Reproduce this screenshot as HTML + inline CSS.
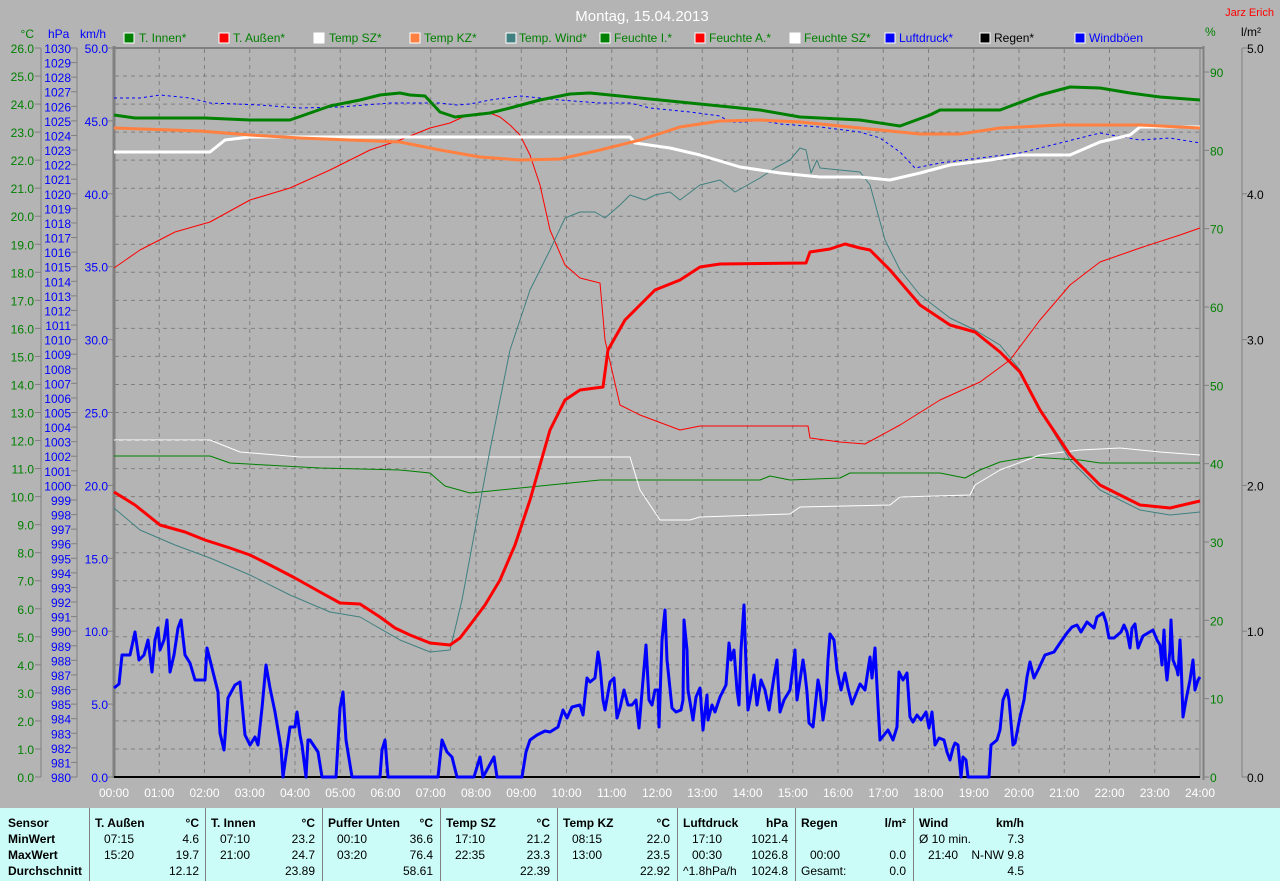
<!DOCTYPE html>
<html><head><meta charset="utf-8"><style>
html,body{margin:0;padding:0;width:1280px;height:881px;overflow:hidden;background:#b4b4b4;font-family:"Liberation Sans",sans-serif}
svg{position:absolute;left:0;top:0}
svg text{font-family:"Liberation Sans",sans-serif;font-size:12px}
#tbl{position:absolute;left:0;top:808px;width:1280px;height:73px;background:#ccfcf8;font-size:12px;color:#000}
.c{position:absolute;top:0;height:73px}
.bl{border-left:1px solid #808080}
.r{position:absolute;white-space:nowrap}
.b{font-weight:bold}
</style></head><body>
<svg width="1280" height="808" viewBox="0 0 1280 808">
<text x="642" y="21" fill="#fff" font-size="15" text-anchor="middle" style="font-size:15px">Montag, 15.04.2013</text>
<text x="1274" y="16" fill="#f00" text-anchor="end" style="font-size:11px">Jarz Erich</text>
<g style="font-size:11px">
<rect x="124" y="33" width="10" height="10" fill="#008000" stroke="#fff"/><text x="139" y="42" fill="#008000">T. Innen*</text>
<rect x="219" y="33" width="10" height="10" fill="#f00" stroke="#fff"/><text x="233" y="42" fill="#008000">T. Außen*</text>
<rect x="314" y="33" width="10" height="10" fill="#fff" stroke="#fff"/><text x="329" y="42" fill="#008000">Temp SZ*</text>
<rect x="410" y="33" width="10" height="10" fill="#ff8040" stroke="#fff"/><text x="424" y="42" fill="#008000">Temp KZ*</text>
<rect x="506" y="33" width="10" height="10" fill="#408080" stroke="#fff"/><text x="519" y="42" fill="#008000">Temp. Wind*</text>
<rect x="600" y="33" width="10" height="10" fill="#008000" stroke="#fff"/><text x="614" y="42" fill="#008000">Feuchte I.*</text>
<rect x="695" y="33" width="10" height="10" fill="#f00" stroke="#fff"/><text x="709" y="42" fill="#008000">Feuchte A.*</text>
<rect x="790" y="33" width="10" height="10" fill="#fff" stroke="#fff"/><text x="804" y="42" fill="#008000">Feuchte SZ*</text>
<rect x="885" y="33" width="10" height="10" fill="#00f" stroke="#fff"/><text x="899" y="42" fill="#00f">Luftdruck*</text>
<rect x="980" y="33" width="10" height="10" fill="#000" stroke="#fff"/><text x="994" y="42" fill="#000">Regen*</text>
<rect x="1075" y="33" width="10" height="10" fill="#00f" stroke="#fff"/><text x="1089" y="42" fill="#00f">Windböen</text>
</g>
<text x="34" y="38" fill="#008000" text-anchor="end">°C</text>
<text x="48" y="38" fill="#00f">hPa</text>
<text x="80" y="38" fill="#00f">km/h</text>
<text x="1205" y="36" fill="#008000">%</text>
<text x="1241" y="36" fill="#000">l/m²</text>
<!-- grid -->
<g stroke="#808080" stroke-dasharray="4,4" stroke-width="1" id="grid"></g>
<g id="gh" stroke="#808080" stroke-dasharray="4,4"></g>
<!-- axes -->
<line x1="41" y1="48" x2="41" y2="777" stroke="#808080"/>
<line x1="77" y1="48" x2="77" y2="777" stroke="#808080"/>
<line x1="114" y1="46" x2="114" y2="778" stroke="#808080" stroke-width="3"/>
<line x1="113" y1="48" x2="1203" y2="48" stroke="#808080" stroke-width="2"/>
<line x1="1200" y1="48" x2="1200" y2="778" stroke="#808080"/>
<line x1="1203.5" y1="46" x2="1203.5" y2="780" stroke="#808080" stroke-width="2"/>
<line x1="1242" y1="48" x2="1242" y2="777" stroke="#808080"/>
<line x1="114" y1="777" x2="1200" y2="777" stroke="#000" stroke-width="2"/>
<g id="labels"></g>
<g fill="none" stroke-linejoin="round">
<polyline stroke="#008000" stroke-width="1" points="114,456 210,456 230,463 320,468 400,470 430,473 445,486 470,493 520,488 600,480 760,480 770,476 790,480 840,478 850,473 940,473 965,478 980,470 1000,462 1030,457 1080,460 1100,463 1200,463"/>
<polyline stroke="#fff" stroke-width="1" points="114,440 210,440 240,452 300,457 630,457 640,490 660,520 690,520 700,517 790,514 800,507 890,505 900,497 970,495 975,485 1000,470 1040,455 1080,450 1120,448 1160,452 1200,455"/>
<polyline stroke="#00f" stroke-width="1" stroke-dasharray="3,3" points="114,98 140,98 160,95 190,98 210,103 260,105 300,108 340,107 390,103 440,103 457,105 470,104 490,100 520,96 560,100 600,103 630,103 650,108 690,112 720,116 730,122 745,122 760,120 780,124 820,127 860,132 880,138 900,152 915,168 940,163 980,158 1020,153 1060,143 1100,133 1140,140 1170,138 1200,143"/>
<polyline stroke="#f00" stroke-width="1" points="114,268 140,250 175,232 210,222 250,200 290,188 330,170 370,150 400,140 430,128 450,123 465,116 480,113 490,113 500,117 510,125 520,135 530,155 540,185 550,230 565,265 580,278 600,283 605,340 620,405 640,415 680,430 700,426 808,426 810,438 840,442 865,444 900,425 940,400 980,382 1010,360 1040,320 1070,285 1100,262 1140,248 1180,235 1200,228"/>
<polyline stroke="#408080" stroke-width="1" points="114,508 140,530 175,545 210,558 250,575 290,595 330,612 360,617 400,640 430,652 450,650 462,600 475,530 490,450 510,350 530,290 550,250 565,218 580,212 595,212 605,218 620,205 630,195 645,200 655,195 670,192 680,200 700,185 720,180 735,192 760,178 775,168 790,160 800,148 806,150 811,173 817,160 820,168 840,170 860,172 870,185 885,240 900,270 920,295 950,318 975,330 1000,345 1020,370 1040,410 1070,460 1100,490 1140,510 1170,515 1200,512"/>
<polyline stroke="#fff" stroke-width="3" points="114,152 210,152 225,140 250,137 630,137 635,143 670,148 700,155 740,167 780,173 820,177 860,177 890,180 920,173 950,165 990,160 1020,155 1070,155 1100,142 1130,135 1140,127 1200,127"/>
<polyline stroke="#ff8040" stroke-width="3" points="114,128 200,131 250,135 300,138 350,140 400,142 440,150 480,157 520,160 560,159 600,150 640,140 680,127 720,121 760,120 800,122 840,126 880,130 920,134 960,134 1000,128 1060,125 1140,125 1200,128"/>
<polyline stroke="#008000" stroke-width="3" points="114,115 135,118 205,118 250,120 290,120 330,106 360,100 380,95 400,93 410,95 425,96 440,112 455,117 490,113 510,108 540,100 570,94 590,93 630,97 660,100 700,104 760,110 800,117 860,120 900,126 930,115 940,110 1000,110 1040,95 1070,87 1100,88 1130,93 1160,97 1200,100"/>
<polyline stroke="#f00" stroke-width="3" points="114,492 135,505 160,525 185,532 205,540 230,548 250,555 270,565 295,578 320,592 340,603 360,604 380,617 395,628 410,635 430,643 450,645 460,638 470,625 485,605 500,580 515,545 530,500 540,465 550,430 565,400 580,390 603,387 608,350 625,320 640,305 655,290 680,280 700,267 720,264 806,263 810,252 830,249 845,244 860,248 870,250 890,270 920,305 950,325 975,332 1000,352 1020,372 1040,410 1070,455 1100,485 1140,505 1170,508 1200,501"/>
<polyline stroke="#00f" stroke-width="3" points="114,688 119,684 122,655 130,655 135,632 139,660 144,655 148,640 152,672 155,640 158,628 160,650 164,640 167,620 170,672 174,655 178,628 181,620 185,655 190,663 195,680 205,680 207,648 212,668 218,692 220,733 224,750 228,698 235,685 240,682 245,735 250,745 255,737 258,745 262,708 266,665 270,688 275,712 281,748 283,777 290,727 295,727 297,712 300,735 302,745 306,777 308,740 310,740 318,752 322,777 336,777 340,708 343,692 346,740 352,777 380,777 382,750 385,740 388,777 438,777 442,740 447,752 452,757 457,777 474,777 480,757 483,777 494,757 497,777 522,777 526,752 530,740 537,735 545,731 550,732 558,727 563,710 567,718 572,707 580,705 583,715 587,678 590,682 595,678 598,652 600,665 603,700 605,710 610,682 614,678 617,718 620,708 624,690 628,705 632,705 636,700 639,728 642,692 646,645 649,700 652,705 655,690 658,690 659,727 662,640 665,610 667,660 672,708 676,712 681,710 683,700 684,620 687,650 688,690 693,720 696,697 700,688 703,730 705,712 707,695 708,720 712,705 715,712 720,697 726,685 729,643 731,660 734,650 737,690 739,705 741,650 744,605 746,665 748,710 750,700 754,675 757,705 761,680 765,690 769,710 774,677 777,660 778,680 780,712 784,700 790,690 795,650 797,700 800,680 803,660 805,674 807,692 809,723 813,727 818,680 820,690 823,720 826,700 828,660 830,634 834,640 837,670 841,690 845,673 848,688 852,704 860,684 865,690 870,657 872,678 875,648 878,705 880,740 884,735 888,730 893,740 897,727 899,672 903,680 907,673 910,717 913,722 917,715 921,720 926,712 929,728 932,712 935,745 939,738 944,740 947,752 950,760 953,748 955,743 958,745 961,777 963,757 966,760 968,777 989,777 991,745 997,740 1000,730 1003,700 1007,690 1009,700 1013,745 1015,743 1020,717 1024,700 1027,677 1030,662 1034,678 1039,668 1045,655 1054,652 1060,643 1067,633 1072,627 1077,625 1081,632 1087,622 1094,628 1097,617 1103,613 1106,622 1109,638 1114,638 1121,632 1124,625 1127,632 1130,648 1132,628 1135,624 1138,648 1143,636 1153,630 1157,640 1160,645 1162,665 1164,630 1166,670 1167,680 1170,650 1171,620 1173,660 1177,670 1178,675 1180,640 1181,660 1183,717 1186,700 1190,680 1193,660 1195,690 1198,680 1200,677"/>
</g>
<g id="xl" fill="#fff" text-anchor="middle"></g>
</svg>
<div id="tbl">
<div class="c" style="left:0;width:89px">
<div class="r b" style="left:8px;top:8px">Sensor</div>
<div class="r b" style="left:8px;top:24px">MinWert</div>
<div class="r b" style="left:8px;top:40px">MaxWert</div>
<div class="r b" style="left:8px;top:56px">Durchschnitt</div>
</div>
</div>
<script>
(function(){
var ns="http://www.w3.org/2000/svg";
function el(t,a,txt,p){var e=document.createElementNS(ns,t);for(var k in a)e.setAttribute(k,a[k]);if(txt!=null)e.textContent=txt;(p||document.querySelector('svg')).appendChild(e);return e;}
var g=document.getElementById('grid');
for(var h=1;h<24;h++){var x=114+h*45.25;el('line',{x1:x,y1:49,x2:x,y2:776},null,g);}
for(var i=1;i<26;i++){var y=48+i*729/26;el('line',{x1:115,y1:y,x2:1200,y2:y},null,g);}
var L=document.getElementById('labels');
for(var i=0;i<=26;i++){var y=48+i*729/26;el('line',{x1:35,y1:y,x2:41,y2:y,stroke:'#808080'},null,L);el('text',{x:34,y:y+5,fill:'#008000','text-anchor':'end'},(26-i).toFixed(1),L);}
for(var i=0;i<=50;i++){var y=48+i*729/50;el('line',{x1:71,y1:y,x2:77,y2:y,stroke:'#808080'},null,L);el('text',{x:71,y:y+5,fill:'#00f','text-anchor':'end'},String(1030-i),L);}
for(var i=0;i<=10;i++){var y=48+i*72.9;el('line',{x1:108,y1:y,x2:114,y2:y,stroke:'#808080'},null,L);el('text',{x:108,y:y+5,fill:'#00f','text-anchor':'end'},(50-5*i).toFixed(1),L);}
for(var i=0;i<=9;i++){var y=777-i*78.33;el('line',{x1:1204,y1:y,x2:1209,y2:y,stroke:'#808080'},null,L);el('text',{x:1210,y:y+5,fill:'#008000'},String(i*10),L);}
for(var i=0;i<=5;i++){var y=777-i*145.8;el('line',{x1:1242,y1:y,x2:1247,y2:y,stroke:'#808080'},null,L);el('text',{x:1247,y:y+5,fill:'#000'},i.toFixed(1),L);}
var X=document.getElementById('xl');
for(var h=0;h<=24;h++){el('text',{x:114+h*45.25,y:797,fill:'#fff','text-anchor':'middle'},(h<10?'0':'')+h+':00',X);}
var T=document.getElementById('tbl');
var cols=[
[89,117,'T. Außen','°C','07:15','4.6','15:20','19.7','','12.12'],
[205,117,'T. Innen','°C','07:10','23.2','21:00','24.7','','23.89'],
[322,118,'Puffer Unten','°C','00:10','36.6','03:20','76.4','','58.61'],
[440,117,'Temp SZ','°C','17:10','21.2','22:35','23.3','','22.39'],
[557,120,'Temp KZ','°C','08:15','22.0','13:00','23.5','','22.92'],
[677,118,'Luftdruck','hPa','17:10','1021.4','00:30','1026.8','^1.8hPa/h','1024.8'],
[795,118,'Regen','l/m²','','','00:00','0.0','Gesamt:','0.0'],
[913,118,'Wind','km/h','Ø 10 min.','7.3','21:40','N-NW 9.8','','4.5']];
cols.forEach(function(c){
var d=document.createElement('div');d.className='c bl';d.style.left=c[0]+'px';d.style.width=c[1]+'px';
if(c[2]=='Wind'){d.className='c bl';d.style.width='367px';}
var w=c[1];
function add(txt,top,left,right,bold){if(!txt)return;var s=document.createElement('div');s.className='r'+(bold?' b':'');s.style.top=top+'px';if(left!=null)s.style.left=left+'px';else s.style.right=(367-w+right)+'px';if(c[2]!='Wind'&&left==null)s.style.right=right+'px';s.textContent=txt;d.appendChild(s);}
add(c[2],8,5,null,true);add(c[3],8,null,8,true);
var ind=(c[2]=='Wind'||c[6]=='Gesamt:')?5:14;
add(c[4],24,c[2]=='Wind'?5:14,null);add(c[5],24,null,8);
add(c[6],40,c[2]=='Wind'?14:14,null);add(c[7],40,null,8);
add(c[8],56,5,null);add(c[9],56,null,8);
T.appendChild(d);});
})();
</script>
</body></html>
